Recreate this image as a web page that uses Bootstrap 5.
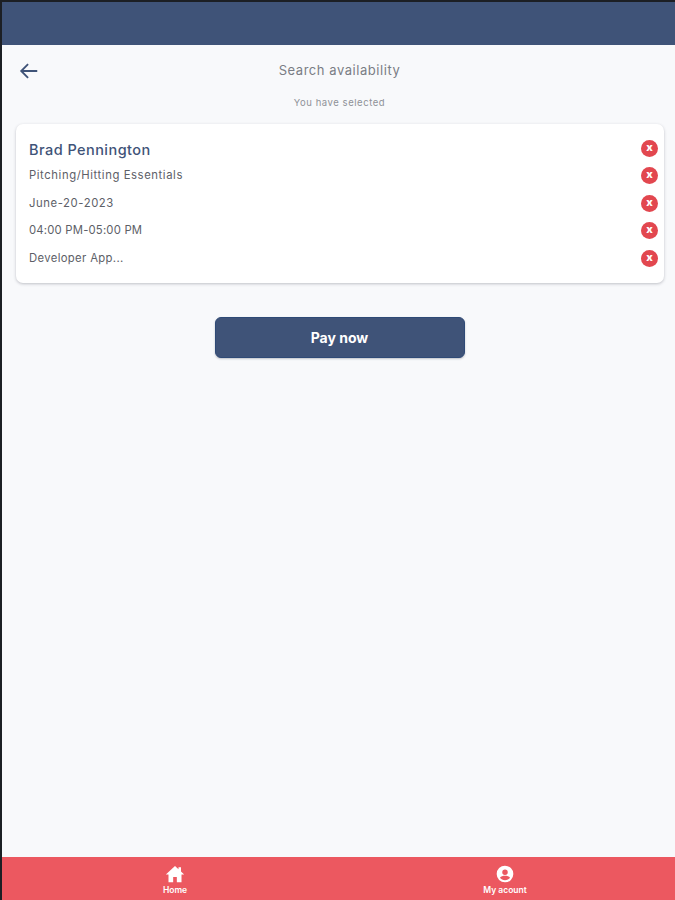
<!DOCTYPE html>
<html lang="en">
<head>
<meta charset="UTF-8" />
<meta name="viewport" content="width=device-width, initial-scale=1.0" />
<title>Search availability</title>
<link href="https://cdn.jsdelivr.net/npm/bootstrap@5.3.3/dist/css/bootstrap.min.css" rel="stylesheet" />
<style>
  html, body { height: 100%; }
  body { background: #1c1f24; font-family: "Inter", "Liberation Sans", sans-serif; padding: 2px 0 0 2px; }
  .app-frame { height: 898px; background: #f8f9fb; }
  .top-bar { height: 43px; background: #3f5378; }
  .title-row { height: 51px; padding: 0 16px; color: #3f5378; }
  .back-btn { width: 22px; height: 22px; }
  .page-title { font-size: 13px; color: #7a7d85; letter-spacing: .55px; margin-right: 22px; padding-left: 2px; }
  .sub-title { font-size: 9.5px; color: #8f9298; line-height: 14px; margin-bottom: 14px; padding-left: 2px; letter-spacing: .55px; }
  .summary-card { margin: 0 11px 0 14px; height: 159px; padding: 12px 6px 11px 13px; background: #fff; border-radius: 7px; box-shadow: 0 1px 3px rgba(60,64,80,.3); }
  .summary-row { height: 27.5px; font-size: 11.3px; color: #5d6067; letter-spacing: .35px; }
  .summary-row.name-row { height: 26px; font-size: 14.5px; font-weight: 500; color: #3f5378; letter-spacing: .45px; }
  .name-row span:first-child { padding-top: 2px; }
  .name-row .remove-dot { margin-bottom: 2px; }
  .remove-dot { width: 17px; height: 17px; background: #e2474f; color: #fff; border-radius: 50%; font-size: 11px; font-weight: 800; line-height: 15px; letter-spacing: 0; text-align: center; flex-shrink: 0; }
  .row-text { margin-top: -1px; }
  .wide-text { letter-spacing: .58px; }
  .time-text { letter-spacing: .2px; }
  .pay-wrap { margin-top: 34px; }
  .pay-btn { width: 250px; height: 41px; margin-left: 2px; padding: 0; background: #3f5378; border: 1px solid #2f4a76; border-radius: 6px; color: #fff; font-size: 14px; font-weight: 700; box-shadow: 0 1px 2px rgba(60,64,80,.3); }
  .bottom-bar { height: 43px; padding-left: 8px; background: #ec5860; color: #fff; }
  .bottom-item { width: 330px; font-size: 8.5px; font-weight: 600; line-height: 10px; }
  .bottom-item svg { display: block; width: 20px; height: 20px; margin: 7px auto 1px; fill: #fff; }
</style>
</head>
<body>
  <div class="app-frame d-flex flex-column">
    <div class="top-bar"></div>

    <div class="title-row d-flex align-items-center">
      <svg class="back-btn flex-shrink-0" viewBox="0 0 24 24" fill="none" stroke="currentColor" stroke-width="2"><path d="M21 12H3.500M11 4.500 3.500 12l7.500 7.500" /></svg>
      <div class="page-title flex-fill text-center">Search availability</div>
    </div>
    <div class="sub-title text-center">You have selected</div>

    <div class="summary-card">
      <div class="summary-row name-row d-flex align-items-center justify-content-between"><span>Brad Pennington</span><span class="remove-dot">x</span></div>
      <div class="summary-row d-flex align-items-center justify-content-between"><span class="row-text wide-text">Pitching/Hitting Essentials</span><span class="remove-dot">x</span></div>
      <div class="summary-row d-flex align-items-center justify-content-between"><span class="wide-text">June-20-2023</span><span class="remove-dot">x</span></div>
      <div class="summary-row d-flex align-items-center justify-content-between"><span class="time-text">04:00 PM-05:00 PM</span><span class="remove-dot">x</span></div>
      <div class="summary-row d-flex align-items-center justify-content-between"><span>Developer App...</span><span class="remove-dot">x</span></div>
    </div>

    <div class="pay-wrap d-flex justify-content-center">
      <button type="button" class="btn pay-btn">Pay now</button>
    </div>

    <div class="bottom-bar mt-auto d-flex text-center">
      <div class="bottom-item">
        <svg viewBox="0 0 24 24"><path d="M12 2.500 1 12.500h3.200V22h5.600v-6.500h4.400V22h5.600v-9.500H23l-3.800-3.500V4h-3v2.300z" />
        </svg>
        Home
      </div>
      <div class="bottom-item">
        <svg viewBox="0 0 24 24"><path fill-rule="evenodd" d="M12 2a10 10 0 1 0 0 20 10 10 0 0 0 0-20zm0 4.500a3.300 3.300 0 1 1 0 6.600 3.300 3.300 0 0 1 0-6.600zm0 13c-2.500 0-4.700-1.100-6-3 .9-1.500 3.700-2.300 6-2.300s5.100.8 6 2.300c-1.300 1.900-3.500 3-6 3z" /></svg>
        My acount
      </div>
    </div>
  </div>
  <script src="https://cdn.jsdelivr.net/npm/bootstrap@5.3.3/dist/js/bootstrap.bundle.min.js"></script>
</body>
</html>
